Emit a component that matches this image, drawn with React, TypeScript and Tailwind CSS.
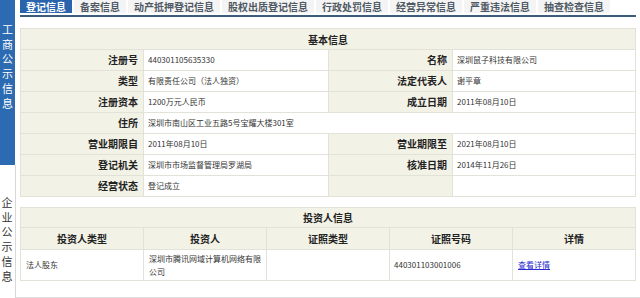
import React from "react";

const CJK = { fontFamily: '"Noto Sans CJK SC", "Liberation Sans", sans-serif' };

const tabs = ["登记信息", "备案信息", "动产抵押登记信息", "股权出质登记信息", "行政处罚信息", "经营异常信息", "严重违法信息", "抽查检查信息"];

function Label({ children }: { children?: React.ReactNode }) {
  return (
    <div className="flex items-center justify-end pr-[5px] bg-[#f2f2e6] border-r border-b border-[#e2e2d8] text-[10px] font-bold text-[#222] leading-none">
      {children}
    </div>
  );
}

function Value({ children, span }: { children?: React.ReactNode; span?: boolean }) {
  return (
    <div className={`flex items-center pl-[4px] bg-white border-r border-b border-[#e2e2d8] text-[8px] text-[#333] leading-none ${span ? "col-span-3" : ""}`}>
      {children}
    </div>
  );
}

function Row({ children }: { children: React.ReactNode }) {
  return <div className="grid grid-cols-[123px_185px_124px_1fr] h-[21px]">{children}</div>;
}

export default function App() {
  return (
    <div className="flex w-[640px] h-[298px] bg-white overflow-hidden" style={CJK}>
      {/* sidebar */}
      <div className="flex flex-col w-[16px] shrink-0">
        <div className="h-[165px] w-[15px] bg-[#2c6ab2] flex flex-col items-center pt-[22px] text-white text-[11px] leading-[14.7px]">
          {"工商公示信息".split("").map((c, i) => (
            <span key={i}>{c}</span>
          ))}
        </div>
        <div className="flex-1 border-r border-[#d8d8d8] flex flex-col items-center pt-[30px] pr-[1px] text-[#333] text-[11px] leading-[14.7px]">
          {"企业公示信息".split("").map((c, i) => (
            <span key={i}>{c}</span>
          ))}
        </div>
      </div>

      {/* main */}
      <div className="flex-1 flex flex-col px-[4px]">
        <div className="flex gap-[2px] h-[15px]">
          {tabs.map((t, i) => (
            <div
              key={t}
              className={`flex items-center px-[6px] text-[10px] font-bold leading-none ${
                i === 0 ? "bg-[#2a64ad] text-white" : "bg-[#f4f4f4] text-[#4f5964]"
              }`}
            >
              {t}
            </div>
          ))}
        </div>
        <div className="mt-[2px] h-[2px] bg-[#3e5c7c]" />

        {/* basic info */}
        <div className="mt-[11px] border-l border-t border-[#e2e2d8]">
          <div className="h-[21px] flex items-center justify-center bg-[#f2f2e6] border-r border-b border-[#e2e2d8] text-[10px] font-bold text-[#222]">
            基本信息
          </div>
          <Row>
            <Label>注册号</Label>
            <Value>440301105635330</Value>
            <Label>名称</Label>
            <Value>深圳鼠子科技有限公司</Value>
          </Row>
          <Row>
            <Label>类型</Label>
            <Value>有限责任公司（法人独资）</Value>
            <Label>法定代表人</Label>
            <Value>谢平章</Value>
          </Row>
          <Row>
            <Label>注册资本</Label>
            <Value>1200万元人民币</Value>
            <Label>成立日期</Label>
            <Value>2011年08月10日</Value>
          </Row>
          <Row>
            <Label>住所</Label>
            <Value span>深圳市南山区工业五路5号宝耀大楼301室</Value>
          </Row>
          <Row>
            <Label>营业期限自</Label>
            <Value>2011年08月10日</Value>
            <Label>营业期限至</Label>
            <Value>2021年08月10日</Value>
          </Row>
          <Row>
            <Label>登记机关</Label>
            <Value>深圳市市场监督管理局罗湖局</Value>
            <Label>核准日期</Label>
            <Value>2014年11月26日</Value>
          </Row>
          <Row>
            <Label>经营状态</Label>
            <Value>登记成立</Value>
            <Label></Label>
            <Value></Value>
          </Row>
        </div>

        {/* investor info */}
        <div className="mt-[10px] border-l border-t border-[#e2e2d8]">
          <div className="h-[20px] flex items-center justify-center bg-[#f2f2e6] border-r border-b border-[#e2e2d8] text-[10px] font-bold text-[#222]">
            投资人信息
          </div>
          <div className="grid grid-cols-5 h-[22px] bg-[#f2f2e6]">
            {["投资人类型", "投资人", "证照类型", "证照号码", "详情"].map((h) => (
              <div key={h} className="flex items-center justify-center border-r border-b border-[#e2e2d8] text-[10px] font-bold text-[#222] leading-none">
                {h}
              </div>
            ))}
          </div>
          <div className="grid grid-cols-5 h-[31px] text-[8px] text-[#333]">
            <div className="flex items-center pl-[5px] border-r border-b border-[#e2e2d8]">法人股东</div>
            <div className="flex items-center pl-[5px] pr-[4px] border-r border-b border-[#e2e2d8] leading-[13px]">
              深圳市腾讯网域计算机网络有限公司
            </div>
            <div className="border-r border-b border-[#e2e2d8]" />
            <div className="flex items-center pl-[4px] border-r border-b border-[#e2e2d8]">440301103001006</div>
            <div className="flex items-center pl-[5px] border-r border-b border-[#e2e2d8]">
              <span className="text-[#2a2ad0] underline">查看详情</span>
            </div>
          </div>
        </div>
        <div className="mt-[16px] -mx-[4px] border-t border-[#dcdcdc]" />
      </div>
    </div>
  );
}
